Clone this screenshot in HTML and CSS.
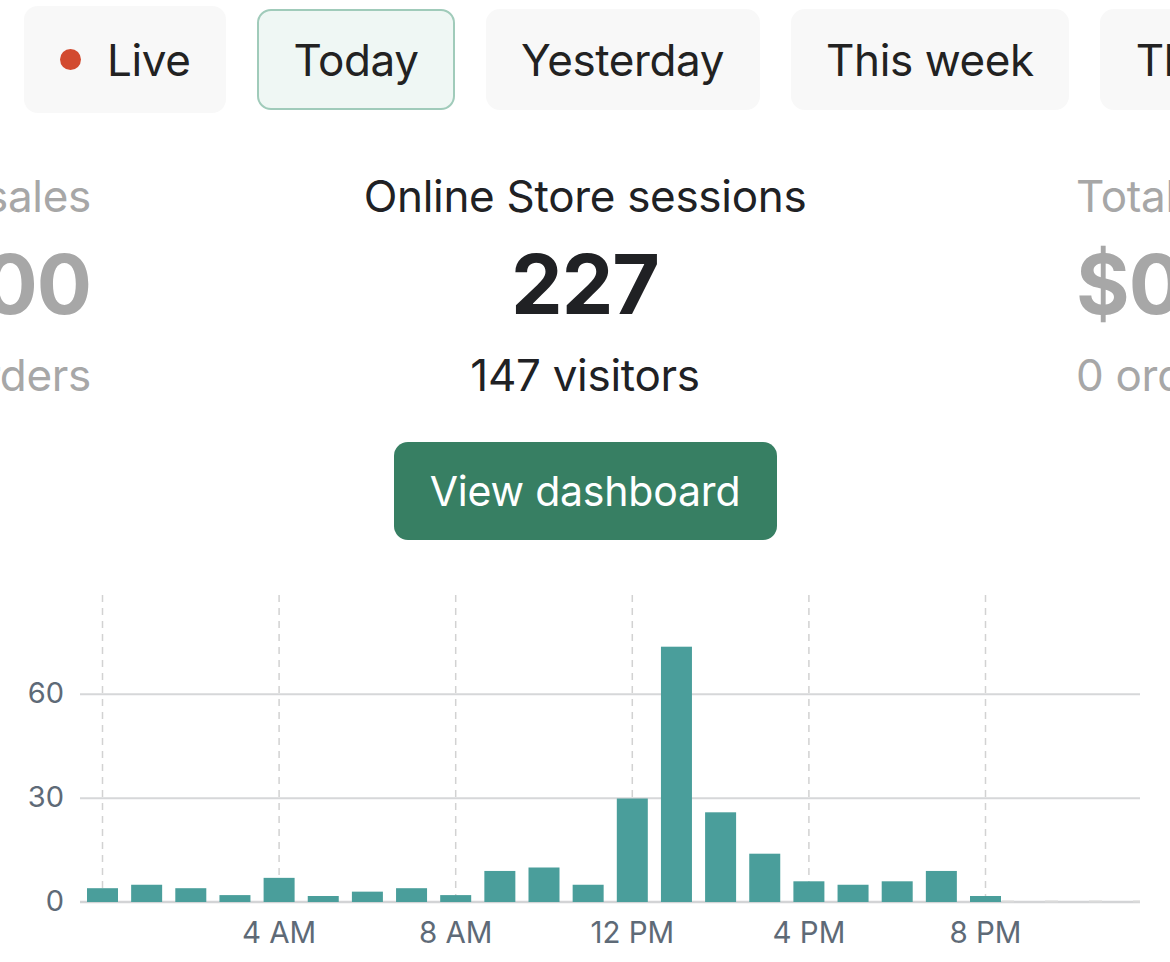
FILE: index.html
```html
<!DOCTYPE html>
<html lang="en">
<head>
<meta charset="utf-8">
<title>Online Store sessions</title>
<link rel="stylesheet" href="styles.css">
</head>
<body>
<div class="page">
  <nav class="tabs">
    <div class="tab live"><span class="dot"></span><span>Live</span></div>
    <div class="tab active">Today</div>
    <div class="tab">Yesterday</div>
    <div class="tab">This week</div>
    <div class="tab">This month</div>
  </nav>

  <section class="stats">
    <div class="stat side left">
      <div class="label">Total sales</div>
      <div class="value">$0.00</div>
      <div class="sub">0 orders</div>
    </div>
    <div class="stat main">
      <div class="label">Online Store sessions</div>
      <div class="value">227</div>
      <div class="sub">147 visitors</div>
    </div>
    <div class="stat side right">
      <div class="label">Total sales</div>
      <div class="value">$0.00</div>
      <div class="sub">0 orders</div>
    </div>
  </section>

  <div class="actions">
    <button class="btn">View dashboard</button>
  </div>

  <div class="chart">
    <svg class="chart-svg" width="1170" height="380" viewBox="0 0 1170 380">
      <g class="vgrid">
        <line x1="102.5" y1="13" x2="102.5" y2="320"/>
        <line x1="279.1" y1="13" x2="279.1" y2="320"/>
        <line x1="455.7" y1="13" x2="455.7" y2="320"/>
        <line x1="632.3" y1="13" x2="632.3" y2="320"/>
        <line x1="808.9" y1="13" x2="808.9" y2="320"/>
        <line x1="985.5" y1="13" x2="985.5" y2="320"/>
      </g>
      <g class="hgrid">
        <line x1="80" y1="112.3" x2="1140" y2="112.3"/>
        <line x1="80" y1="216.3" x2="1140" y2="216.3"/>
      </g>
      <line class="axis" x1="80" y1="320" x2="1140" y2="320"/>
      <g class="bars">
        <rect x="87" y="306.2" width="31" height="13.8"/>
        <rect x="131.15" y="302.75" width="31" height="17.25"/>
        <rect x="175.3" y="306.2" width="31" height="13.8"/>
        <rect x="219.45" y="313.1" width="31" height="6.9"/>
        <rect x="263.6" y="295.85" width="31" height="24.15"/>
        <rect x="307.75" y="314" width="31" height="6"/>
        <rect x="351.9" y="309.65" width="31" height="10.35"/>
        <rect x="396.05" y="306.2" width="31" height="13.8"/>
        <rect x="440.2" y="313.1" width="31" height="6.9"/>
        <rect x="484.35" y="288.95" width="31" height="31.05"/>
        <rect x="528.5" y="285.5" width="31" height="34.5"/>
        <rect x="572.65" y="302.75" width="31" height="17.25"/>
        <rect x="616.8" y="216.5" width="31" height="103.5"/>
        <rect x="660.95" y="64.7" width="31" height="255.3"/>
        <rect x="705.1" y="230.3" width="31" height="89.7"/>
        <rect x="749.25" y="271.7" width="31" height="48.3"/>
        <rect x="793.4" y="299.3" width="31" height="20.7"/>
        <rect x="837.55" y="302.75" width="31" height="17.25"/>
        <rect x="881.7" y="299.3" width="31" height="20.7"/>
        <rect x="925.85" y="288.95" width="31" height="31.05"/>
        <rect x="970" y="314" width="31" height="6"/>
      </g>
      <g class="zero">
        <rect x="1002" y="318.5" width="12" height="2"/>
        <rect x="1045" y="318.5" width="13" height="2"/>
        <rect x="1089" y="318.5" width="13" height="2"/>
        <rect x="1133" y="318.5" width="7" height="2"/>
      </g>
      <g class="ylabels">
        <text x="64" y="120.7">60</text>
        <text x="64" y="224.7">30</text>
        <text x="64" y="328.5">0</text>
      </g>
      <g class="xlabels">
        <text x="279.1" y="360.7">4 AM</text>
        <text x="455.7" y="360.7">8 AM</text>
        <text x="632.3" y="360.7">12 PM</text>
        <text x="808.9" y="360.7">4 PM</text>
        <text x="985.5" y="360.7">8 PM</text>
      </g>
    </svg>
  </div>
</div>
</body>
</html>
```

FILE: styles.css
```css
* { box-sizing: border-box; }

html, body {
  margin: 0;
  padding: 0;
  background: #ffffff;
}

body {
  font-family: Inter, "Noto Sans", "Liberation Sans", sans-serif;
  color: #202124;
  width: 1170px;
  height: 962px;
  overflow: hidden;
}

.page {
  width: 1170px;
  overflow: hidden;
}

/* Tabs */
.tabs {
  display: flex;
  align-items: center;
  gap: 31px;
  padding: 6px 0 0 24px;
  height: 113px;
  overflow: hidden;
  white-space: nowrap;
}

.tab {
  flex-shrink: 0;
  display: flex;
  align-items: center;
  height: 101px;
  padding: 0 35.5px;
  border-radius: 14px;
  background: #f8f8f8;
  font-size: 44px;
  color: #222222;
  letter-spacing: -0.4px;
}

.tab.live {
  height: 107px;
  gap: 26px;
  padding: 0 36px 0 36px;
}

.tab.active {
  background: #eff7f4;
  border: 2px solid #a0cbba;
  padding: 0 34px;
}

.dot {
  width: 21px;
  height: 21px;
  border-radius: 50%;
  background: #d24a2f;
}

/* Stats */
.stats {
  display: grid;
  grid-template-columns: minmax(0, 1fr) 440px minmax(0, 1fr);
  margin-top: 57px;
  white-space: nowrap;
}

.stat {
  display: flex;
  flex-direction: column;
  min-width: 0;
}

.stat.main {
  align-items: center;
}

.stat.side {
  color: #a7a7a7;
}

.stat.left {
  align-items: flex-end;
  padding-right: 274px;
}

.stat.right {
  align-items: flex-start;
  padding-left: 271px;
}

.label {
  font-size: 44px;
  line-height: 52px;
  letter-spacing: -0.3px;
}

.value {
  font-size: 82px;
  line-height: 92px;
  font-weight: 700;
  margin-top: 17px;
  letter-spacing: -1px;
}

.sub {
  font-size: 44px;
  line-height: 52px;
  margin-top: 18px;
  letter-spacing: -0.3px;
}

/* Button */
.actions {
  display: flex;
  justify-content: center;
  margin-top: 41px;
}

.btn {
  width: 383px;
  height: 98px;
  border: none;
  border-radius: 14px;
  background: #377f63;
  color: #ffffff;
  font-family: Inter, "Noto Sans", "Liberation Sans", sans-serif;
  font-size: 41px;
  letter-spacing: -0.2px;
  padding: 0;
}

/* Chart */
.chart {
  margin-top: 42px;
  height: 380px;
}

.chart-svg {
  display: block;
}

.vgrid line {
  stroke: #d2d2d2;
  stroke-width: 1.5;
  stroke-dasharray: 7 6;
}

.hgrid line {
  stroke: #d6d7d9;
  stroke-width: 2;
}

.axis {
  stroke: #d3d4d6;
  stroke-width: 2.5;
}

.bars rect {
  fill: #4a9e9b;
}

.zero rect {
  fill: #dadada;
}

.ylabels text {
  font-family: Inter, "Noto Sans", "Liberation Sans", sans-serif;
  font-size: 29px;
  fill: #5e6a77;
  text-anchor: end;
}

.xlabels text {
  font-family: Inter, "Noto Sans", "Liberation Sans", sans-serif;
  font-size: 29.5px;
  fill: #5e6a77;
  text-anchor: middle;
}
```
